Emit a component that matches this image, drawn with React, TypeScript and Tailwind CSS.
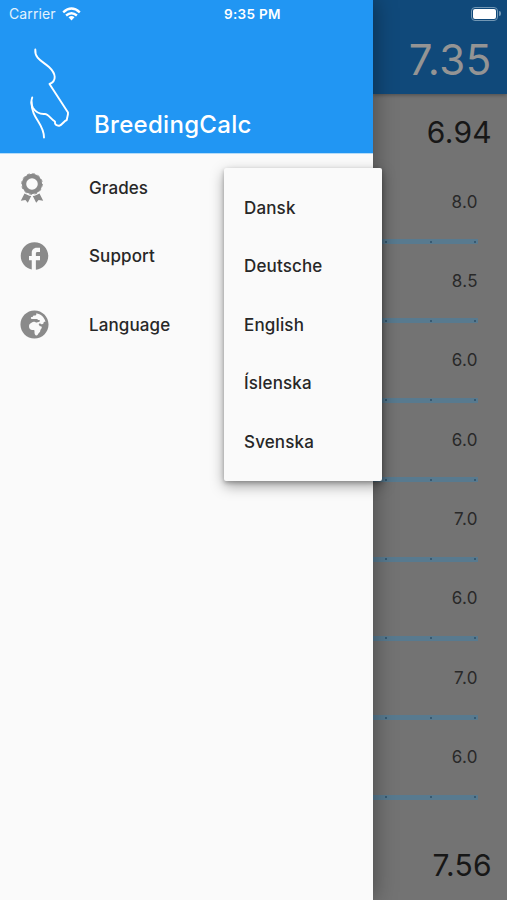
import React from "react";
import { FaGlobeAfrica } from "react-icons/fa";
import { MdFacebook } from "react-icons/md";

const grades = ["8.0", "8.5", "6.0", "6.0", "7.0", "6.0", "7.0", "6.0"];
const languages = ["Dansk", "Deutsche", "English", "Íslenska", "Svenska"];

function Wifi() {
  return (
    <svg className="ml-[6px] h-[14px] w-[19px]" viewBox="0 0 19 14" fill="none" stroke="white" strokeWidth="2.4">
      <path d="M1.2 5.3Q9.5 -2.2 17.8 5.3" />
      <path d="M4.1 8.5Q9.5 3.8 14.9 8.5" />
      <path d="M6.5 10.3Q9.5 7.8 12.5 10.3L9.5 13.6Z" fill="white" stroke="none" />
    </svg>
  );
}

function Horse() {
  return (
    <svg className="h-[92px] w-[42px]" viewBox="0 0 42 92" fill="none" stroke="white" strokeWidth="1.9" strokeLinecap="round" strokeLinejoin="round">
      <path d="M7.3 1.500C6.500 11 15 13.500 21 19C28 25.500 29 33 21.500 36L40 64.500C40.300 67 39 69 38.800 72C36 73 34.500 76.500 31.500 77.700C28.500 78 26.500 76.500 27 73.500C23 71.500 20.500 66 17 66C11 66.500 8 64.500 5 60C2.600 56 3 53 4.200 49.500" />
      <path d="M3.500 54C3.500 71 16 75 16 89.500" />
    </svg>
  );
}

function Rosette() {
  return (
    <svg className="h-[30px] w-[24px]" viewBox="0 0 24 30">
      <circle cx="12" cy="11" r="8" fill="none" stroke="currentColor" strokeWidth="4.400" />
      <circle cx="12" cy="11" r="10.300" fill="none" stroke="currentColor" strokeWidth="1" strokeDasharray="2.700 2.700" />
      <path d="M4.500 20.500L9.300 22.800L11.200 23L7.800 29.800L5.400 26.900L.8 27.800ZM19.500 20.500L14.700 22.800L12.800 23L16.200 29.800L18.600 26.900L23.200 27.800Z" fill="currentColor" />
    </svg>
  );
}

function Item({ icon, label }: { icon: React.ReactNode; label: string }) {
  return (
    <div className="flex h-[68.5px] items-center pl-[18px]">
      <div className="-mt-px flex w-[33px] justify-center text-[#8a8a8a]">{icon}</div>
      <span className="ml-[38px] text-[17px] font-medium tracking-[0.1px] text-[#272727]">{label}</span>
    </div>
  );
}

export default function App() {
  return (
    <div className="relative flex h-[900px] w-[507px] overflow-hidden bg-[#737373] font-['Inter',sans-serif]">
      <aside className="z-10 flex w-[373px] shrink-0 flex-col bg-[#fafafa] shadow-[0_0_22px_rgba(0,0,0,0.4)]">
        <header className="h-[154px] border-b border-[#b5dcf8] bg-[#2196f3] text-white">
          <div className="flex h-[27px] items-center pl-[9px]">
            <span className="w-[47px] text-[14px] tracking-[0.1px] text-[#e3f2fd]">Carrier</span>
            <Wifi />
            <span className="ml-[143px] mt-px whitespace-nowrap text-[13.5px] font-semibold tracking-[0.3px]">9:35 PM</span>
          </div>
          <div className="flex pl-[28px] pt-[21px]">
            <Horse />
            <h1 className="ml-[24px] mt-[61px] text-[24px] font-medium leading-[32px] tracking-[0.3px]">BreedingCalc</h1>
          </div>
        </header>
        <nav>
          <Item icon={<span className="mr-[6px]"><Rosette /></span>} label="Grades" />
          <Item icon={<MdFacebook size={34} />} label="Support" />
          <Item icon={<FaGlobeAfrica size={29} />} label="Language" />
        </nav>
      </aside>
      <main className="flex flex-1 flex-col text-right text-[#171717]">
        <header className="h-[94px] bg-[#10497a] pr-[15px] shadow-[0_1px_4px_rgba(0,0,0,0.35)]">
          <div className="-mr-[9px] flex h-[27px] items-center justify-end">
            <div className="h-[14px] w-[27px] rounded-[4px] border border-[#7297b4] p-[1px]">
              <div className="h-full rounded-[2px] bg-white" />
            </div>
            <div className="ml-[1px] h-[5px] w-[2px] rounded-r bg-[#7297b4]" />
          </div>
          <div className="mt-[8px] text-[42px] leading-[50px] tracking-[0.6px] text-[#949494]">7.35</div>
        </header>
        <div className="h-[88px] pr-[15px] pt-[17px] text-[30px] leading-[42px] tracking-[0.3px]">6.94</div>
        {grades.map((grade, i) => (
          <div key={i} className="h-[79.4px] shrink-0 pr-[29px]">
            <div className="h-[57px] pt-[7.5px] text-[17px] leading-[24px] tracking-[0.4px] text-[#292929]">{grade}</div>
            <div className="flex h-[5px] items-center justify-between bg-[#587a8f] pl-[12px] pr-[2px]">
              <i className="h-[2px] w-[2px] rounded-full bg-[#2c5068]" />
              <i className="h-[2px] w-[2px] rounded-full bg-[#2c5068]" />
              <i className="h-[2px] w-[2px] rounded-full bg-[#2c5068]" />
            </div>
          </div>
        ))}
        <div className="pr-[15px] pt-[27px] text-[30px] leading-[42px] tracking-[0.3px]">7.56</div>
      </main>
      <div className="absolute left-[224px] top-[168px] z-20 h-[313px] w-[158px] rounded-[2px] bg-[#fafafa] py-[11px] shadow-[0_5px_14px_rgba(0,0,0,0.35),0_2px_4px_rgba(0,0,0,0.25)]">
        {languages.map((language) => (
          <div key={language} className="flex h-[58.6px] items-center pl-[20px] text-[17px] font-medium tracking-[0.15px] text-[#272727]">{language}</div>
        ))}
      </div>
    </div>
  );
}
